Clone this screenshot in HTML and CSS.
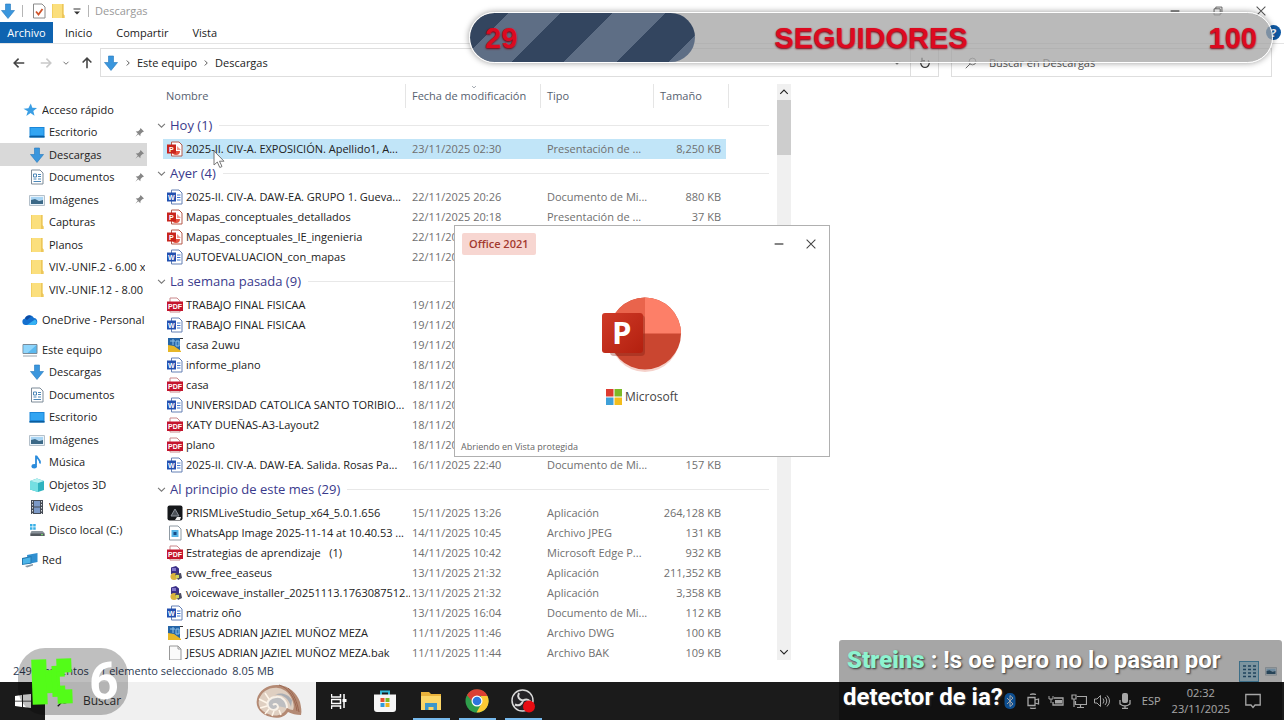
FILE: index.html
```
<!DOCTYPE html>
<html lang="es">
  <head>
    <title>Descargas</title>
    <meta charset="UTF-8" />
    <link rel="stylesheet" href="styles.css">
  </head>
  <body>
    <svg class="sprite" aria-hidden="true">
      <symbol id="i-down" viewBox="0 0 16 16"><path d="M5.500 1h5v6.500h4L8 15.500 1.500 7.500h4z" fill="#3a96dd" stroke="#2277bd" stroke-width=".6"/></symbol>
      <symbol id="i-folder" viewBox="0 0 16 16"><path d="M2.500 1h11v10.500l1 1V15h-12z" fill="#fbdf7d"/><path d="M12 1h1.500v10l1 1.500V15H12z" fill="#ecc65a"/><path d="M2.500 1v14" stroke="#f2cf62"/></symbol>
      <symbol id="i-star" viewBox="0 0 16 16"><path d="M8.800 1.500l1.500 4.300 4.700.3-3.700 2.800 1.200 4.800-4-2.600-4.200 2.800 1.500-4.700L1.500 6.800l4.900-.5z" fill="#3a9ee4"/></symbol>
      <symbol id="i-desktop" viewBox="0 0 16 16"><path d="M.5 3h15v10.500H.5z" fill="#1b86d8"/><path d="M1.500 4h13v7h-13z" fill="#32a5f2"/><path d="M.5 12h15v1.500H.5z" fill="#0b5c9c"/></symbol>
      <symbol id="i-doc" viewBox="0 0 16 16"><path d="M2.500 1h8.500l3 3v11h-11.500z" fill="#fff" stroke="#7d8b98"/><path d="M4.500 5h3v3h-3zM4.500 10h3M9 10h3M9 5.500h3M9 7.500h3M4.500 12.500h7.500" fill="none" stroke="#4b87b8"/></symbol>
      <symbol id="i-image" viewBox="0 0 16 16"><path d="M.5 3.500h15v10H.5z" fill="#eaf3fa" stroke="#b4c0ca"/><path d="M2 5h12v3.500H2z" fill="#a9d5f4"/><path d="M2 8l4-1 4 2 4-1v4H2z" fill="#3c6987"/></symbol>
      <symbol id="i-cloud" viewBox="0 0 16 16"><path d="M3.500 13a3.300 3.300 0 0 1-.6-6.500A5 5 0 0 1 12 6a3.600 3.600 0 0 1 .8 7z" fill="#1470cf"/><path d="M5 13l8-5.500A3 3 0 0 1 12.800 13z" fill="#35b1f3"/><path d="M3 6.500a5 5 0 0 1 6.500-2.600L5 8z" fill="#0c4aa3"/></symbol>
      <symbol id="i-pc" viewBox="0 0 16 16"><path d="M1 2.500h14v9H1z" fill="#5bb9ef" stroke="#7b8b98"/><path d="M1.500 3h13l-9 8h-4z" fill="#8fd5fb"/><path d="M1 14h14" stroke="#98a4ad"/></symbol>
      <symbol id="i-music" viewBox="0 0 16 16"><path d="M7 1.500v10M7.500 2c.5 3 4.500 3.500 3.500 7.500" fill="none" stroke="#2a8bdc" stroke-width="1.800"/><ellipse cx="5.200" cy="12.200" rx="2.700" ry="2.200" fill="#2a8bdc"/></symbol>
      <symbol id="i-cube" viewBox="0 0 16 16"><path d="M1 4l7-2.500L15 4v9l-6 2-8-2.500z" fill="#2fb3bf"/><path d="M1 4l8 2v9l-8-2.500z" fill="#74dfe2"/><path d="M1 4l7-2.500L15 4 9 6z" fill="#b5f1f0"/></symbol>
      <symbol id="i-video" viewBox="0 0 16 16"><path d="M2 1h12v14H2z" fill="#454b55"/><path d="M5 2h6v5.500H5zM5 8.500h6V14H5z" fill="#7c99c6"/><path d="M3.500 2v13M12.500 2v13" stroke="#d8dce0" stroke-dasharray="1.500 1.500"/></symbol>
      <symbol id="i-disk" viewBox="0 0 16 16"><path d="M1 2h2.500v2.500H1zM4.200 2h2.500v2.500H4.200zM1 5.200h2.500v2.500H1zM4.200 5.200h2.500v2.500H4.200z" fill="#38b0e6"/><path d="M2.500 9h11l2 2v3h-14v-3z" fill="#8a9299"/><path d="M1.500 11.500h14V14h-14z" fill="#53595f"/><path d="M12 12.700h2" stroke="#7bed6d"/></symbol>
      <symbol id="i-net" viewBox="0 0 16 16"><path d="M5 3l10.500-2v9L6 12z" fill="#2f8fd0"/><path d="M0 6l9.500-2v7.500L0 13z" fill="#2578ae"/><path d="M1 7l7.500-1.700v5.400L1 12z" fill="#4bb4e8"/><path d="M3 14l8-2v1.500l-6 2z" fill="#8a98a3"/></symbol>
      <symbol id="i-pin" viewBox="0 0 16 16"><path d="M9.500 1.500l5 5-1.500.8-1 .2-2.500 2.500-.3 3.500-3-3L2 14l3.500-4.500-3-3 3.500-.3L8.500 4z" fill="#868686"/></symbol>
      <symbol id="i-ppt" viewBox="0 0 16 16"><path d="M4.500 1H12l3 3v11H4.500z" fill="#fff" stroke="#b55a4c"/><path d="M9 6a4 4 0 1 0 4 4H9z" fill="#e5523f"/><path d="M10 5v4h4" fill="#ef9a8d"/><path d="M0 3.500h9v9H0z" fill="#c8251d"/><text x="2" y="10.700" class="badge">P</text></symbol>
      <symbol id="i-word" viewBox="0 0 16 16"><path d="M4.500 1H12l3 3v11H4.500z" fill="#fff" stroke="#6480b5"/><path d="M10 6h3.500M10 8.500h3.500M10 11h3.500" stroke="#3f76d1"/><path d="M0 3.500h9v9H0z" fill="#2350b0"/><text x="1" y="10.700" class="badge">W</text></symbol>
      <symbol id="i-pdf" viewBox="0 0 16 16"><path d="M3 1h7l3 3v11H3z" fill="#fff" stroke="#c9888b"/><path d="M0 4.500h16V14H0z" fill="#c4152d"/><text x="1" y="11.800" class="badge">PDF</text></symbol>
      <symbol id="i-dwg" viewBox="0 0 16 16"><path d="M1 1h12v14H1z" fill="#2565a7"/><path d="M1 8l6 1 7 5v1H1z" fill="#e7b727"/><path d="M3 4h5M6 2v6M9 4h3v5H9z" stroke="#8fc1e8" fill="#2d73b5"/><path d="M13 1.500h3" stroke="#333"/></symbol>
      <symbol id="i-prism" viewBox="0 0 16 16"><rect x=".5" y=".5" width="15" height="15" rx="2" fill="#15171a"/><path d="M4 11l4-7 4 7z" fill="#4d5259" stroke="#8c929a"/><path d="M8 15l2-3h4l-1 3z" fill="#f0f0f0"/></symbol>
      <symbol id="i-jpeg" viewBox="0 0 16 16"><path d="M2.500 1h8.500l3 3v11H2.500z" fill="#fff" stroke="#8f9aa3"/><path d="M4.500 5h7v7h-7z" fill="#55b4e6"/><path d="M6.500 7h3v3h-3z" fill="#174c87"/></symbol>
      <symbol id="i-setup" viewBox="0 0 16 16"><path d="M4 2.500L9 1l3 2.500V9H4z" fill="#3a2f86"/><path d="M5 3h4v3H5z" fill="#8276c9"/><circle cx="7" cy="11.500" r="3.500" fill="#d9b33c"/><path d="M8 9l6-1 1 5-4 2z" fill="#4d4d63"/><path d="M9 10h3v3H9z" fill="#cfd35a"/></symbol>
      <symbol id="i-blank" viewBox="0 0 16 16"><path d="M2.500 1H11l3 3v11H2.500z" fill="#fafafa" stroke="#989898"/><path d="M11 1v3h3" fill="none" stroke="#989898"/></symbol>
      <symbol id="i-chev" viewBox="0 0 16 16"><path d="M3 5.500l5 5 5-5" fill="none" stroke="currentColor" stroke-width="1.500"/></symbol>
      <symbol id="i-close" viewBox="0 0 16 16"><path d="M3 3l10 10M13 3L3 13" stroke="currentColor" stroke-width="1.200"/></symbol>
      <symbol id="i-min" viewBox="0 0 16 16"><path d="M3 8h10" stroke="currentColor" stroke-width="1.500"/></symbol>
      <symbol id="i-arrow" viewBox="0 0 16 16"><path d="M14 8H3M7.500 3L2.500 8l5 5" fill="none" stroke="currentColor" stroke-width="1.800"/></symbol>
    </svg>

    <main class="explorer">
      <header class="titlebar">
        <svg class="icon"><use href="#i-down"/></svg>
        <span class="titlebar__sep"></span>
        <button class="titlebar__tool" aria-label="Propiedades"><svg class="icon" viewBox="0 0 16 16"><path d="M2.500 1H11l3 3v11H2.500z" fill="#fff" stroke="#8a8a8a"/><path d="M5 8.500l2.500 3L11.500 6" fill="none" stroke="#d0542b" stroke-width="1.800"/></svg></button>
        <button class="titlebar__tool" aria-label="Nueva carpeta"><svg class="icon"><use href="#i-folder"/></svg></button>
        <button class="titlebar__tool" aria-label="Personalizar"><svg class="icon icon--small" viewBox="0 0 12 12"><path d="M2.500 4h7" stroke="#333"/><path d="M3 6.500h6L6 9.500z" fill="#333"/></svg></button>
        <span class="titlebar__sep"></span>
        <h1 class="titlebar__name">Descargas</h1>
        <div class="titlebar__buttons">
          <button aria-label="Minimizar"><svg class="icon"><use href="#i-min"/></svg></button>
          <button aria-label="Restaurar"><svg class="icon" viewBox="0 0 16 16"><path d="M3.500 5.500h7v7h-7zM5.500 5.500v-2h7v7h-2" fill="none" stroke="currentColor"/></svg></button>
          <button aria-label="Cerrar"><svg class="icon"><use href="#i-close"/></svg></button>
        </div>
      </header>

      <nav class="ribbon">
        <button class="ribbon__file">Archivo</button>
        <button class="ribbon__tab">Inicio</button>
        <button class="ribbon__tab">Compartir</button>
        <button class="ribbon__tab">Vista</button>
        <button class="ribbon__help" aria-label="Ayuda">?</button>
      </nav>

      <div class="navbar">
        <div class="navbar__history">
          <button aria-label="Atrás"><svg class="icon"><use href="#i-arrow"/></svg></button>
          <button class="disabled" aria-label="Adelante"><svg class="icon flip"><use href="#i-arrow"/></svg></button>
          <button class="narrow" aria-label="Recientes"><svg class="icon icon--tiny"><use href="#i-chev"/></svg></button>
          <button aria-label="Subir"><svg class="icon up"><use href="#i-arrow"/></svg></button>
        </div>
        <div class="address">
          <svg class="icon"><use href="#i-down"/></svg>
          <svg class="icon icon--tiny right"><use href="#i-chev"/></svg>
          <a href="#">Este equipo</a>
          <svg class="icon icon--tiny right"><use href="#i-chev"/></svg>
          <a href="#">Descargas</a>
          <button class="address__drop" aria-label="Ubicaciones"><svg class="icon icon--tiny"><use href="#i-chev"/></svg></button>
          <button class="address__reload" aria-label="Actualizar"><svg class="icon icon--small" viewBox="0 0 16 16"><path d="M4 4.500a5.500 5.500 0 1 0 8 0M4 1v4h4" fill="none" stroke="#333" stroke-width="1.800"/></svg></button>
        </div>
        <label class="search">
          <svg class="icon icon--small" viewBox="0 0 16 16"><circle cx="10" cy="6" r="4.500" fill="none" stroke="#666"/><path d="M6.500 9.500L1 15" stroke="#666" stroke-width="1.300"/></svg>
          <input type="text" placeholder="Buscar en Descargas" aria-label="Buscar en Descargas">
        </label>
      </div>

      <div class="panes">
        <nav class="sidebar">
          <ul class="tree">
            <li class="tree__item tree__item--root"><svg class="icon"><use href="#i-star"/></svg><a href="#">Acceso rápido</a></li>
            <li class="tree__item"><svg class="icon"><use href="#i-desktop"/></svg><a href="#">Escritorio</a><svg class="icon icon--pin"><use href="#i-pin"/></svg></li>
            <li class="tree__item tree__item--active"><svg class="icon"><use href="#i-down"/></svg><a href="#">Descargas</a><svg class="icon icon--pin"><use href="#i-pin"/></svg></li>
            <li class="tree__item"><svg class="icon"><use href="#i-doc"/></svg><a href="#">Documentos</a><svg class="icon icon--pin"><use href="#i-pin"/></svg></li>
            <li class="tree__item"><svg class="icon"><use href="#i-image"/></svg><a href="#">Imágenes</a><svg class="icon icon--pin"><use href="#i-pin"/></svg></li>
            <li class="tree__item"><svg class="icon"><use href="#i-folder"/></svg><a href="#">Capturas</a></li>
            <li class="tree__item"><svg class="icon"><use href="#i-folder"/></svg><a href="#">Planos</a></li>
            <li class="tree__item"><svg class="icon"><use href="#i-folder"/></svg><a href="#">VIV.-UNIF.2 - 6.00 x</a></li>
            <li class="tree__item"><svg class="icon"><use href="#i-folder"/></svg><a href="#">VIV.-UNIF.12 - 8.00 x</a></li>
          </ul>
          <ul class="tree">
            <li class="tree__item tree__item--root"><svg class="icon"><use href="#i-cloud"/></svg><a href="#">OneDrive - Personal</a></li>
          </ul>
          <ul class="tree">
            <li class="tree__item tree__item--root"><svg class="icon"><use href="#i-pc"/></svg><a href="#">Este equipo</a></li>
            <li class="tree__item"><svg class="icon"><use href="#i-down"/></svg><a href="#">Descargas</a></li>
            <li class="tree__item"><svg class="icon"><use href="#i-doc"/></svg><a href="#">Documentos</a></li>
            <li class="tree__item"><svg class="icon"><use href="#i-desktop"/></svg><a href="#">Escritorio</a></li>
            <li class="tree__item"><svg class="icon"><use href="#i-image"/></svg><a href="#">Imágenes</a></li>
            <li class="tree__item"><svg class="icon"><use href="#i-music"/></svg><a href="#">Música</a></li>
            <li class="tree__item"><svg class="icon"><use href="#i-cube"/></svg><a href="#">Objetos 3D</a></li>
            <li class="tree__item"><svg class="icon"><use href="#i-video"/></svg><a href="#">Videos</a></li>
            <li class="tree__item"><svg class="icon"><use href="#i-disk"/></svg><a href="#">Disco local (C:)</a></li>
          </ul>
          <ul class="tree">
            <li class="tree__item tree__item--root"><svg class="icon"><use href="#i-net"/></svg><a href="#">Red</a></li>
          </ul>
        </nav>

        <div class="files">
          <table class="list">
            <colgroup><col class="col-name"><col class="col-date"><col class="col-type"><col class="col-size"><col></colgroup>
            <thead>
              <tr>
                <th><span>Nombre</span></th>
                <th><span>Fecha de modificación<svg class="icon icon--sort"><use href="#i-chev"/></svg></span></th>
                <th><span>Tipo</span></th>
                <th><span>Tamaño</span></th>
                <th></th>
              </tr>
            </thead>
            <tbody>
              <tr class="group"><th colspan="5"><div><svg class="icon"><use href="#i-chev"/></svg>Hoy (1)</div></th></tr>
              <tr class="selected"><td><div><svg class="icon"><use href="#i-ppt"/></svg><span>2025-II. CIV-A. EXPOSICIÓN. Apellido1, A...</span></div></td><td>23/11/2025 02:30</td><td>Presentación de ...</td><td>8,250 KB</td></tr>
            </tbody>
            <tbody>
              <tr class="group"><th colspan="5"><div><svg class="icon"><use href="#i-chev"/></svg>Ayer (4)</div></th></tr>
              <tr><td><div><svg class="icon"><use href="#i-word"/></svg><span>2025-II. CIV-A. DAW-EA. GRUPO 1. Gueva...</span></div></td><td>22/11/2025 20:26</td><td>Documento de Mi...</td><td>880 KB</td></tr>
              <tr><td><div><svg class="icon"><use href="#i-ppt"/></svg><span>Mapas_conceptuales_detallados</span></div></td><td>22/11/2025 20:18</td><td>Presentación de ...</td><td>37 KB</td></tr>
              <tr><td><div><svg class="icon"><use href="#i-ppt"/></svg><span>Mapas_conceptuales_IE_ingenieria</span></div></td><td>22/11/20</td><td></td><td></td></tr>
              <tr><td><div><svg class="icon"><use href="#i-word"/></svg><span>AUTOEVALUACION_con_mapas</span></div></td><td>22/11/20</td><td></td><td></td></tr>
            </tbody>
            <tbody>
              <tr class="group"><th colspan="5"><div><svg class="icon"><use href="#i-chev"/></svg>La semana pasada (9)</div></th></tr>
              <tr><td><div><svg class="icon"><use href="#i-pdf"/></svg><span>TRABAJO FINAL FISICAA</span></div></td><td>19/11/20</td><td></td><td></td></tr>
              <tr><td><div><svg class="icon"><use href="#i-word"/></svg><span>TRABAJO FINAL FISICAA</span></div></td><td>19/11/20</td><td></td><td></td></tr>
              <tr><td><div><svg class="icon"><use href="#i-dwg"/></svg><span>casa 2uwu</span></div></td><td>19/11/20</td><td></td><td></td></tr>
              <tr><td><div><svg class="icon"><use href="#i-word"/></svg><span>informe_plano</span></div></td><td>18/11/20</td><td></td><td></td></tr>
              <tr><td><div><svg class="icon"><use href="#i-pdf"/></svg><span>casa</span></div></td><td>18/11/20</td><td></td><td></td></tr>
              <tr><td><div><svg class="icon"><use href="#i-word"/></svg><span>UNIVERSIDAD CATOLICA SANTO TORIBIO...</span></div></td><td>18/11/20</td><td></td><td></td></tr>
              <tr><td><div><svg class="icon"><use href="#i-pdf"/></svg><span>KATY DUEÑAS-A3-Layout2</span></div></td><td>18/11/20</td><td></td><td></td></tr>
              <tr><td><div><svg class="icon"><use href="#i-pdf"/></svg><span>plano</span></div></td><td>18/11/20</td><td></td><td></td></tr>
              <tr><td><div><svg class="icon"><use href="#i-word"/></svg><span>2025-II. CIV-A. DAW-EA. Salida. Rosas Pa...</span></div></td><td>16/11/2025 22:40</td><td>Documento de Mi...</td><td>157 KB</td></tr>
            </tbody>
            <tbody>
              <tr class="group"><th colspan="5"><div><svg class="icon"><use href="#i-chev"/></svg>Al principio de este mes (29)</div></th></tr>
              <tr><td><div><svg class="icon"><use href="#i-prism"/></svg><span>PRISMLiveStudio_Setup_x64_5.0.1.656</span></div></td><td>15/11/2025 13:26</td><td>Aplicación</td><td>264,128 KB</td></tr>
              <tr><td><div><svg class="icon"><use href="#i-jpeg"/></svg><span>WhatsApp Image 2025-11-14 at 10.40.53 ...</span></div></td><td>14/11/2025 10:45</td><td>Archivo JPEG</td><td>131 KB</td></tr>
              <tr><td><div><svg class="icon"><use href="#i-pdf"/></svg><span>Estrategias de aprendizaje &nbsp; (1)</span></div></td><td>14/11/2025 10:42</td><td>Microsoft Edge P...</td><td>932 KB</td></tr>
              <tr><td><div><svg class="icon"><use href="#i-setup"/></svg><span>evw_free_easeus</span></div></td><td>13/11/2025 21:32</td><td>Aplicación</td><td>211,352 KB</td></tr>
              <tr><td><div><svg class="icon"><use href="#i-setup"/></svg><span>voicewave_installer_20251113.1763087512...</span></div></td><td>13/11/2025 21:32</td><td>Aplicación</td><td>3,358 KB</td></tr>
              <tr><td><div><svg class="icon"><use href="#i-word"/></svg><span>matriz oño</span></div></td><td>13/11/2025 16:04</td><td>Documento de Mi...</td><td>112 KB</td></tr>
              <tr><td><div><svg class="icon"><use href="#i-dwg"/></svg><span>JESUS ADRIAN JAZIEL MUÑOZ MEZA</span></div></td><td>11/11/2025 11:46</td><td>Archivo DWG</td><td>100 KB</td></tr>
              <tr><td><div><svg class="icon"><use href="#i-blank"/></svg><span>JESUS ADRIAN JAZIEL MUÑOZ MEZA.bak</span></div></td><td>11/11/2025 11:44</td><td>Archivo BAK</td><td>109 KB</td></tr>
            </tbody>
          </table>
        </div>

        <div class="scrollbar">
          <svg class="icon icon--small flip"><use href="#i-chev"/></svg>
          <div class="scrollbar__thumb"></div>
          <svg class="icon icon--small"><use href="#i-chev"/></svg>
        </div>
      </div>

      <footer class="status">
        <span class="status__count">249 elementos</span>
        <span>1 elemento seleccionado</span>
        <span>8.05 MB</span>
        <div class="status__views">
          <button class="active" aria-label="Detalles"><svg class="icon" viewBox="0 0 16 16"><path d="M2 3h3M2 6.500h3M2 10h3M2 13.500h3M7 3h3M7 6.500h3M7 10h3M7 13.500h3M12 3h3M12 6.500h3M12 10h3M12 13.500h3" stroke="#31688f" stroke-width="1.500"/></svg></button>
          <button aria-label="Iconos grandes"><svg class="icon icon--small"><use href="#i-image"/></svg></button>
        </div>
      </footer>

      <section class="splash">
        <header class="splash__top">
          <span class="splash__tag">Office 2021</span>
          <button aria-label="Minimizar"><svg class="icon"><use href="#i-min"/></svg></button>
          <button aria-label="Cerrar"><svg class="icon"><use href="#i-close"/></svg></button>
        </header>
        <div class="splash__brand">
          <svg class="splash__logo" viewBox="0 0 80 76">
            <defs>
              <linearGradient id="tile" x1="0" y1="0" x2="1" y2="1"><stop offset="0" stop-color="#cf3a27"/><stop offset="1" stop-color="#b3200f"/></linearGradient>
            </defs>
            <ellipse cx="43" cy="39" rx="35" ry="36" fill="#f5d2cb"/>
            <circle cx="43" cy="36.500" r="36" fill="#ca4630"/>
            <path d="M43 36.500V.5A36 36 0 0 0 7 36.500z" fill="#e9644c"/>
            <path d="M43 36.500V.5A36 36 0 0 1 79 36.500z" fill="#fd7f68"/>
            <rect x="8" y="18" width="35" height="41" rx="4" fill="#7c1a0d" opacity=".35"/>
            <rect x="0" y="16" width="41" height="40" rx="3" fill="url(#tile)"/>
            <text x="10" y="47" class="splash__letter">P</text>
          </svg>
          <div class="splash__maker">
            <svg class="icon" viewBox="0 0 16 16"><path d="M0 0h7.500v7.500H0z" fill="#dd3b30"/><path d="M8.500 0H16v7.500H8.500z" fill="#7cb927"/><path d="M0 8.500h7.500V16H0z" fill="#3fa0d8"/><path d="M8.500 8.500H16V16H8.500z" fill="#f3bd1c"/></svg>
            Microsoft
          </div>
        </div>
        <p class="splash__note">Abriendo en Vista protegida</p>
      </section>
    </main>

    <footer class="taskbar">
      <button class="taskbar__start" aria-label="Inicio"><svg class="icon" viewBox="0 0 16 16"><path d="M0 3l7-1v5.700H0zM8 1.800L16 1v6.700H8zM0 8.500h7V14l-7-1zM8 8.500h8V15l-8-1z" fill="#fff"/></svg></button>
      <label class="taskbar__search">
        <svg class="icon icon--small" viewBox="0 0 16 16"><circle cx="10" cy="6" r="4.500" fill="none" stroke="#222" stroke-width="1.500"/><path d="M6.500 9.500L1 15" stroke="#222" stroke-width="1.800"/></svg>
        <input type="text" placeholder="Buscar" aria-label="Buscar">
        <svg class="shell" viewBox="0 0 48 36">
          <path d="M46 32c-5 0-9-1-13-3-3 5-10 7-17 5C6 32 0 24 2 16 4 7 13 1 24 2c10 1 18 8 21 17 1 5 2 9 1 13z" fill="#b48a74"/>
          <path d="M38 27c-2 0-4-1-6-2-3 6-9 9-16 7C8 30 2 24 4 17 6 9 14 4 23 5c8 1 13 7 15 14 1 3 1 6 0 8z" fill="#dfcfc1"/>
          <path d="M36 24c-2-8-8-13-16-12 6-3 13-1 17 5z" fill="#a9adb3"/>
          <path d="M32 25c0-7-5-12-11-11-6 0-10 5-8 9 2 5 9 5 10 1 0-3-3-4-5-2" fill="#bdbec1" stroke="#f8f1e8" stroke-width="2"/>
          <path d="M12 20l-8-4M12 23l-7 2M14 26l-4 5M19 28l-2 5M24 27l2 5M14 16l-4-6" stroke="#fff6ea" stroke-width="1.500"/>
          <path d="M24 2c10 3 16 13 18 26M33 5c6 6 9 14 11 24" fill="none" stroke="#9b6650"/>
        </svg>
      </label>
      <button class="taskbar__app" aria-label="Vista de tareas"><svg class="icon" viewBox="0 0 16 16"><path d="M.5 1v3h9V1M.5 6.500h9v4h-9zM.5 16v-3h9v3M13 1v14" fill="none" stroke="#fff" stroke-width="1.500"/><path d="M11.500 6h4v3h-4z" fill="#fff"/></svg></button>
      <button class="taskbar__app" aria-label="Microsoft Store"><svg class="icon icon--app" viewBox="0 0 24 24"><path d="M8 6V2.500h8V6" fill="none" stroke="#33b9d6" stroke-width="2"/><path d="M1 5.500h22V20q0 3-3 3H4q-3 0-3-3z" fill="#f6f6f6"/><path d="M7.500 9h4v4h-4z" fill="#e5502e"/><path d="M12.500 9h4v4h-4z" fill="#7cb927"/><path d="M7.500 14h4v4h-4z" fill="#2f9bdc"/><path d="M12.500 14h4v4h-4z" fill="#f0b51c"/></svg></button>
      <button class="taskbar__app taskbar__app--open" aria-label="Explorador de archivos"><svg class="icon icon--app" viewBox="0 0 24 24"><path d="M2 3h8l2 2h10v16H2z" fill="#e9b23b"/><path d="M2 7h20v14H2z" fill="#fcd668"/><path d="M6 21v-7h12v7h-3.500v-3h-5v3z" fill="#3d97ca"/></svg></button>
      <button class="taskbar__app taskbar__app--open" aria-label="Google Chrome"><svg class="icon icon--app" viewBox="0 0 24 24"><circle cx="12" cy="12" r="11.500" fill="#2f9e4b"/><path d="M2 6.300A11.500 11.500 0 0 1 22.500 7H12a5 5 0 0 0-5 5z" fill="#dc3f33"/><path d="M22.500 7A11.500 11.500 0 0 1 11.500 23.500L16.500 14.500 16 7z" fill="#fcc934"/><circle cx="12" cy="12" r="5.500" fill="#fff"/><circle cx="12" cy="12" r="4.300" fill="#2d76dd"/></svg></button>
      <button class="taskbar__app taskbar__app--open" aria-label="OBS Studio"><svg class="icon icon--app" viewBox="0 0 24 24"><circle cx="11.500" cy="11.500" r="10.500" fill="#252327" stroke="#d9d9d9" stroke-width="1.500"/><path d="M8 4c-2 4 0 7 4 7.500 4-2 7-.5 8 3M12 11.500c-1 4-4 6-8 4" fill="none" stroke="#d9d9d9" stroke-width="2"/><circle cx="18" cy="17.500" r="6" fill="#e80c12"/></svg></button>
      <div class="tray">
        <svg class="icon" viewBox="0 0 16 16"><rect x="2.500" width="11" height="16" rx="5" fill="#1478dd"/><path d="M5 5l6 6-3 2.500v-11L11 5l-6 6" fill="none" stroke="#fff"/></svg>
        <svg class="icon" viewBox="0 0 16 16"><path d="M3 4.500h7v8H3zM10 7l3.500-1v5L10 10M5 1.500q3-1 6 0M5 15q3 1 6 0" fill="none" stroke="#fff" stroke-width="1.300"/></svg>
        <svg class="icon" viewBox="0 0 16 16"><path d="M6 5h9v7H5V9" fill="none" stroke="#fff" stroke-width="1.300"/><path d="M7 7h7v3.500H7z" fill="#fff"/><path d="M1 3v3h4V3M3 6v4" stroke="#fff" fill="none"/></svg>
        <svg class="icon" viewBox="0 0 16 16"><path d="M6 3.500h9.500v8H4.500V8M6 14.500h7M9.500 11.500v3M1 2h4v4H1zM3 6v8" fill="none" stroke="#fff" stroke-width="1.200"/></svg>
        <svg class="icon" viewBox="0 0 16 16"><path d="M.5 6H3l3.500-3.500v11L3 10H.5zM9 5.500q2 2.500 0 5M11 4q3.500 4 0 8M13 2.500q5 5.500 0 11" fill="none" stroke="#fff"/></svg>
        <svg class="icon" viewBox="0 0 16 16"><rect x="5" width="6" height="10" rx="2" fill="#fff"/><path d="M3 7v4q5 4 10 0V7M8 13v3M5 15.500h6" fill="none" stroke="#fff" stroke-width="1.300"/></svg>
        <span class="tray__lang">ESP</span>
        <time class="tray__clock">02:32<br>23/11/2025</time>
        <button aria-label="Notificaciones"><svg class="icon" viewBox="0 0 16 16"><path d="M.8 1.500h14.400v10.500H10l-2 2.500L6 12H.8z" fill="none" stroke="#fff" stroke-width="1.300"/></svg></button>
      </div>
    </footer>

    <!-- stream overlays -->
    <div class="goal">
      <div class="goal__fill"></div>
      <span>29</span>
      <span>SEGUIDORES</span>
      <span>100</span>
    </div>

    <div class="viewers">
      <svg class="viewers__logo" viewBox="0 0 42 48" aria-hidden="true">
        <g fill="#53fc18" transform="rotate(-2 21 24)">
          <rect x="1" y="1" width="15" height="45"/>
          <rect x="15" y="12" width="12" height="23"/>
          <rect x="21" y="8" width="6" height="31"/>
          <rect x="26" y="1" width="15" height="14"/>
          <rect x="26" y="14" width="8" height="5"/>
          <rect x="26" y="18" width="3" height="12"/>
          <rect x="26" y="28" width="8" height="5"/>
          <rect x="26" y="32" width="15" height="14"/>
        </g>
      </svg>
      <span>6</span>
    </div>

    <p class="chat"><b>Streins</b> : !s oe pero no lo pasan por detector de ia?</p>

    <svg class="cursor" viewBox="0 0 12 19" aria-hidden="true"><path d="M1 1v14l3.300-3 2.500 5.500 2.200-1-2.500-5.300H11z" fill="#fff" stroke="#777"/></svg>
  </body>
</html>
```
FILE: styles.css
```
* {
  box-sizing: border-box;
}

body {
  display: flex;
  flex-direction: column;
  height: 100vh;
  margin: 0;
  overflow: hidden;
  font-family: 'Open Sans', 'Noto Sans', sans-serif;
  font-size: 11px;
  line-height: 16px;
  color: #222222;
  background: #ffffff;
}

button,
input {
  padding: 0;
  border: none;
  background: none;
  font: inherit;
  color: inherit;
}

button {
  display: flex;
  align-items: center;
  justify-content: center;
}

a {
  color: inherit;
  text-decoration: none;
}

.sprite {
  position: absolute;
  width: 0;
  height: 0;
}

.icon {
  flex: none;
  width: 16px;
  height: 16px;
}

.icon--small {
  width: 12px;
  height: 12px;
}

.icon--tiny {
  width: 8px;
  height: 8px;
}

.icon--app {
  width: 24px;
  height: 24px;
}

.flip {
  transform: rotate(180deg);
}

.up {
  transform: rotate(90deg);
}

.right {
  transform: rotate(-90deg);
}

.badge {
  font-family: 'Liberation Sans', sans-serif;
  font-size: 7px;
  font-weight: bold;
  fill: #ffffff;
}

/* window */

.explorer {
  position: relative;
  display: flex;
  flex-direction: column;
  flex: 1;
  min-height: 0;
}

.titlebar {
  display: flex;
  align-items: center;
  height: 22px;
}

.titlebar > .icon {
  margin-right: 4px;
}

.titlebar__sep {
  width: 1px;
  height: 12px;
  margin: 0 6px 0 2px;
  background: #b5b5b5;
}

.titlebar__tool {
  width: 19px;
}

.titlebar__name {
  margin: 0;
  font-size: 11px;
  font-weight: normal;
  color: #999999;
}

.titlebar__buttons {
  display: flex;
  margin-left: auto;
  padding-right: 2px;
  color: #555555;
}

.titlebar__buttons button {
  width: 43px;
}

.titlebar__buttons .icon {
  width: 14px;
  height: 14px;
}

.ribbon {
  display: flex;
  height: 22px;
  border-bottom: 1px solid #e4e4e4;
}

.ribbon__file {
  width: 53px;
  height: 21px;
  background: #0e63b0;
  color: #ffffff;
}

.ribbon__tab {
  padding: 0 12px;
}

.ribbon__help {
  width: 15px;
  height: 15px;
  margin: 3px 3px 0 auto;
  border-radius: 50%;
  background: #0f5aa5;
  font-weight: bold;
  color: #ffffff;
}

.navbar {
  display: flex;
  height: 38px;
  padding: 4px 12px 5px 0;
}

.navbar__history {
  display: flex;
  width: 100px;
  padding-left: 7px;
  color: #444444;
}

.navbar__history button {
  width: 23px;
}

.navbar__history .icon {
  width: 14px;
  height: 14px;
}

.navbar__history button:nth-child(2) {
  margin-left: 4px;
}

.navbar__history .narrow {
  width: 18px;
}

.navbar__history .narrow .icon {
  width: 8px;
  height: 8px;
}

.navbar__history .disabled {
  color: #c9c9c9;
}

.address {
  display: flex;
  flex: 1;
  align-items: center;
  gap: 5px;
  padding-left: 2px;
  border: 1px solid #dedede;
}

.address__drop {
  width: 16px;
  margin-left: auto;
}

.address__reload {
  align-self: stretch;
  width: 28px;
  border-left: 1px solid #dedede;
}

.search {
  display: flex;
  align-items: center;
  width: 321px;
  margin-left: 12px;
  padding-left: 13px;
  gap: 12px;
  border: 1px solid #dedede;
}

.search input {
  flex: 1;
}

.search input::placeholder {
  color: #555555;
}

.panes {
  display: flex;
  flex: 1;
  min-height: 0;
  padding-top: 2px;
}

/* tree */

.sidebar {
  display: flex;
  flex-direction: column;
  gap: 7px;
  width: 147px;
  padding-top: 14px;
}

.tree {
  margin: 0;
  padding: 0;
  list-style: none;
}

.tree__item {
  display: flex;
  align-items: center;
  gap: 4px;
  height: 23px;
  padding: 0 2px 0 29px;
  white-space: nowrap;
}

.tree__item:nth-child(even) {
  height: 22px;
}

.tree__item--root {
  padding-left: 22px;
}

.tree__item--active {
  background: #d9d9d9;
}

.tree__item a {
  flex: 1;
  overflow: hidden;
}

.icon--pin {
  width: 11px;
  height: 11px;
}

/* file list */

.files {
  width: 630px;
  padding-left: 16px;
  overflow: hidden;
}

.list {
  width: 100%;
  border-collapse: separate;
  border-spacing: 0;
  table-layout: fixed;
}

.col-name {
  width: 243px;
}

.col-date {
  width: 135px;
}

.col-type {
  width: 113px;
}

.col-size {
  width: 75px;
}

.list th,
.list td {
  padding: 0;
  font-weight: normal;
  text-align: left;
  white-space: nowrap;
}

.list thead th {
  height: 27px;
  vertical-align: top;
  color: #56616f;
}

.list thead span {
  position: relative;
  display: block;
  height: 24px;
  padding: 4px 0 0 6px;
  border-right: 1px solid #e5e5e5;
}

.list thead th:first-child span {
  padding-left: 3px;
}

.icon--sort {
  position: absolute;
  top: 0;
  left: 64px;
  width: 8px;
  height: 6px;
}

.list td {
  height: 20px;
  padding-left: 6px;
  color: #6f6f6f;
}

.list td:first-child {
  padding-left: 4px;
  color: #222222;
}

.list td:nth-child(4) {
  padding: 0 5px 0 0;
  border-right: 3px solid transparent;
  background-clip: padding-box;
  text-align: right;
}

.list td div {
  display: flex;
  align-items: center;
  gap: 3px;
  margin-right: -4px;
  overflow: hidden;
}

.selected td {
  background-color: #c1e5f8;
}

.group th {
  height: 28px;
}

.group div {
  display: flex;
  align-items: center;
  gap: 3px;
  margin: 0 8px 0 -7px;
  font-size: 13px;
  color: #3a3a8c;
}

.group div::after {
  content: '';
  flex: 1;
  height: 1px;
  margin-left: 4px;
  background: #e8e8e8;
}

.group .icon {
  width: 11px;
  height: 11px;
  color: #777777;
}

.scrollbar {
  display: flex;
  flex-direction: column;
  align-items: center;
  width: 14px;
  padding: 2px 0;
  background: #f0f0f0;
}

.scrollbar__thumb {
  width: 100%;
  height: 55px;
  margin: 2px 0 auto;
  background: #cdcdcd;
}

.status {
  display: flex;
  align-items: center;
  gap: 5px;
  height: 22px;
  padding: 0 3px 0 13px;
  color: #2c3a52;
}

.status__count {
  width: 82px;
}

.status__views {
  display: flex;
  gap: 2px;
  margin-left: auto;
}

.status__views button {
  width: 20px;
  height: 21px;
}

.status__views .active {
  border: 1px solid #5fa9d0;
  background: #bfe3f5;
}

/* splash window */

.splash {
  position: absolute;
  top: 50%;
  left: 50%;
  transform: translate(-50%, -50%);
  display: flex;
  flex-direction: column;
  width: 376px;
  height: 232px;
  border: 1px solid #b0b0b0;
  background: #ffffff;
}

.splash__top {
  display: flex;
  align-items: center;
  padding: 7px 10px 0 7px;
  color: #444444;
}

.splash__top button {
  width: 16px;
  margin-left: 16px;
}

.splash__top .icon {
  width: 14px;
  height: 14px;
}

.splash__tag {
  margin-right: auto;
  padding: 3px 7px;
  border-radius: 2px;
  background: #f7d6d1;
  font-weight: 600;
  color: #a33a2f;
}

.splash__brand {
  display: flex;
  flex: 1;
  flex-direction: column;
  align-items: center;
  justify-content: center;
  gap: 16px;
  padding-top: 8px;
}

.splash__logo {
  width: 80px;
  height: 76px;
}

.splash__letter {
  font-family: 'Open Sans', sans-serif;
  font-size: 31px;
  font-weight: bold;
  fill: #ffffff;
}

.splash__maker {
  display: flex;
  align-items: center;
  gap: 3px;
  font-size: 12px;
  color: #444444;
}

.splash__note {
  margin: 0;
  padding: 0 6px 1px;
  font-size: 9px;
  color: #666666;
}

/* taskbar */

.taskbar {
  display: flex;
  height: 38px;
  background: #1b1b1b;
  color: #ffffff;
}

.taskbar__start {
  width: 45px;
}

.taskbar__search {
  display: flex;
  align-items: center;
  gap: 14px;
  width: 271px;
  padding: 0 13px 0 12px;
  background: #f0f0f0;
  color: #222222;
}

.taskbar__search input {
  flex: 1;
  min-width: 0;
  font-size: 12px;
}

.taskbar__search input::placeholder {
  color: #333333;
}

.shell {
  width: 48px;
  height: 36px;
}

.taskbar__app {
  width: 46px;
}

.taskbar__app--open {
  background: linear-gradient(#76b9ed, #76b9ed) bottom / 37px 2px no-repeat;
}

.tray {
  display: flex;
  align-items: center;
  gap: 7px;
  margin-left: auto;
  padding-right: 23px;
}

.tray__lang {
  margin-left: 2px;
}

.tray__clock {
  margin: 0 8px 0 4px;
  text-align: center;
}

/* stream overlays */

.goal {
  position: absolute;
  top: 12px;
  left: 469px;
  right: 11px;
  display: grid;
  grid-template-columns: 1fr auto 1fr;
  align-items: center;
  height: 51px;
  padding: 0 15px;
  border: 1px solid #ffffff;
  border-radius: 26px;
  background: rgba(163, 163, 163, 0.75);
  box-shadow: 0 0 6px rgba(0, 0, 0, 0.4);
  overflow: hidden;
  font-family: 'Liberation Sans', sans-serif;
  font-size: 29px;
  font-weight: bold;
  line-height: 32px;
  color: #dc0a20;
  text-shadow: 0 1px 2px #7a0010;
}

.goal__fill {
  position: absolute;
  top: 0;
  bottom: 0;
  left: 0;
  width: 28%;
  border-radius: 26px;
  background: repeating-linear-gradient(135deg, #33455f 0, #33455f 27px, #5e6e85 27px, #5e6e85 64px, #33455f 64px, #33455f 74px);
}

.goal span {
  position: relative;
}

.goal span:last-child {
  text-align: right;
}

.viewers {
  position: absolute;
  bottom: 5px;
  left: 18px;
  display: flex;
  align-items: center;
  gap: 16px;
  height: 67px;
  padding: 0 9px 0 13px;
  border-radius: 27px;
  background: rgba(0, 0, 0, 0.25);
  font-family: Roboto, sans-serif;
  font-size: 52px;
  font-weight: bold;
  line-height: 64px;
  color: #ffffff;
}

.viewers__logo {
  width: 42px;
  height: 48px;
}

.chat {
  position: absolute;
  right: 2px;
  bottom: 0;
  width: 443px;
  height: 80px;
  margin: 0;
  padding: 2px 40px 0 4px;
  border-radius: 3px 3px 0 0;
  background: rgba(0, 0, 0, 0.35);
  font-family: Roboto, sans-serif;
  font-size: 24px;
  font-weight: bold;
  line-height: 37px;
  color: #ffffff;
  text-shadow: 1px 1px 2px #333333;
}

.chat b {
  margin-left: 4px;
  color: #8df3d0;
}

.cursor {
  position: absolute;
  top: 150px;
  left: 213px;
  width: 12px;
  height: 19px;
}
```
